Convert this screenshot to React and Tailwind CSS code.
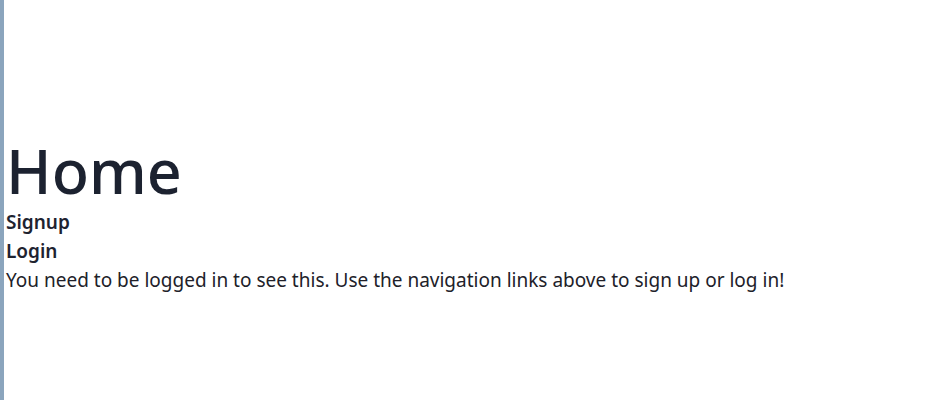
export default function App() {
  return (
    <div className="flex h-[400px] bg-white">
      <div className="w-[4px] shrink-0 bg-[#8ba5bd]" />
      <main className="pl-[2px] pt-[133px] font-['Noto_Sans',sans-serif] text-[#1e2330]">
        <h1 className="text-[61px] leading-[75px] font-medium text-[#1c2230]">Home</h1>
        <nav className="flex flex-col text-[19px] leading-[29px] font-semibold">
          <a>Signup</a>
          <a>Login</a>
        </nav>
        <p className="text-[19px] leading-[29px] text-[#212129]">
          You need to be logged in to see this. Use the navigation links above to sign up or log in!
        </p>
      </main>
    </div>
  );
}
